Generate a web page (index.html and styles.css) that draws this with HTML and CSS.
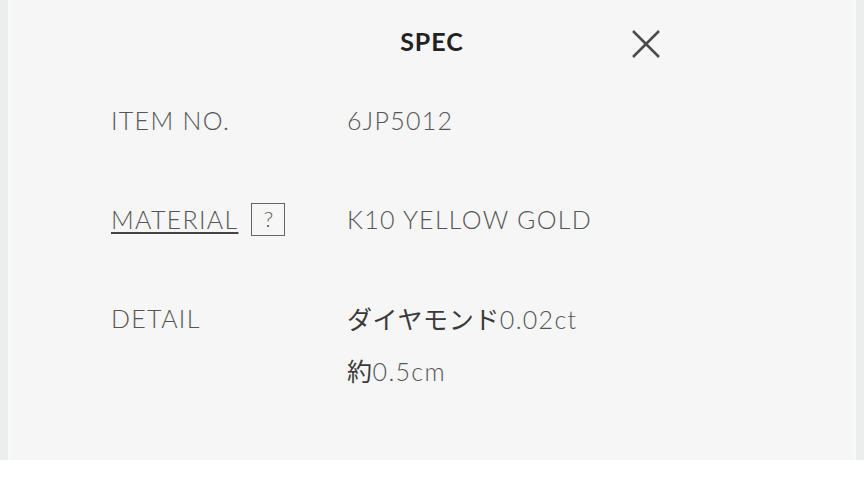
FILE: index.html
```html
<!DOCTYPE html>
<html lang="ja">
<head>
<meta charset="utf-8">
<link rel="stylesheet" href="styles.css">
</head>
<body>
<div class="page">
  <div class="edge edge-left"></div>
  <section class="panel">
    <header class="head">
      <h1 class="title">SPEC</h1>
      <button class="close" aria-label="close">
        <svg width="30" height="30" viewBox="0 0 30 30"><path d="M2 2 L28 28 M28 2 L2 28" stroke="#4a4a4a" stroke-width="2.5" fill="none"/></svg>
      </button>
    </header>
    <div class="rows">
      <div class="row">
        <div class="label">ITEM NO.</div>
        <div class="value">6JP5012</div>
      </div>
      <div class="row">
        <div class="label"><span class="link">MATERIAL</span><span class="qbox">?</span></div>
        <div class="value">K10 YELLOW GOLD</div>
      </div>
      <div class="row">
        <div class="label">DETAIL</div>
        <div class="value multi">
          <div class="line"><span class="jp">ダイヤモンド</span>0.02ct</div>
          <div class="line"><span class="jp">約</span>0.5cm</div>
        </div>
      </div>
    </div>
  </section>
  <div class="edge edge-right"></div>
</div>
</body>
</html>
```
FILE: styles.css
```css
* { box-sizing: border-box; }
html, body { margin: 0; padding: 0; background: #ffffff; }
body { font-family: Lato, "Noto Sans CJK JP", sans-serif; color: #555; }
.page { display: flex; height: 460px; }
.edge { background: #eceeed; }
.edge-left { width: 10px; border-right: 2px solid #f8faf9; }
.edge-right { width: 10px; border-left: 2px solid #f8faf9; margin-left: auto; }
.panel { flex: 1; background: #f6f6f6; display: flex; flex-direction: column; }
.head { position: relative; height: 104px; display: flex; justify-content: center; }
.title { margin: 25px 0 0; font-weight: 700; font-size: 25px; color: #222; letter-spacing: 1px; line-height: 32px; height: 32px; }
.close { position: absolute; left: 621px; top: 29px; background: none; border: 0; padding: 0; width: 30px; height: 30px; }
.close svg { display: block; }
.rows { display: flex; flex-direction: column; padding-left: 101px; }
.row { display: flex; min-height: 99px; }
.label { width: 236px; flex: none; font-weight: 300; font-size: 25px; line-height: 32px; color: #555; display: flex; align-items: center; align-self: flex-start; letter-spacing: 1.3px; height: 32px; }
.value { font-weight: 300; font-size: 25px; line-height: 32px; color: #555; letter-spacing: 1.3px; }
.link { text-decoration: underline; text-decoration-thickness: 2px; text-underline-offset: 3px; text-decoration-color: #444; }
.qbox { margin-left: 13px; width: 34px; height: 33px; border: 1.5px solid #666; display: inline-flex; align-items: center; justify-content: center; font-size: 22px; color: #5a5a5a; letter-spacing: 0; }
.multi { display: flex; flex-direction: column; gap: 19px; }
.jp { font-family: "Noto Sans CJK JP", sans-serif; font-weight: 400; color: #3a3a3a; letter-spacing: 0.6px; }
```
